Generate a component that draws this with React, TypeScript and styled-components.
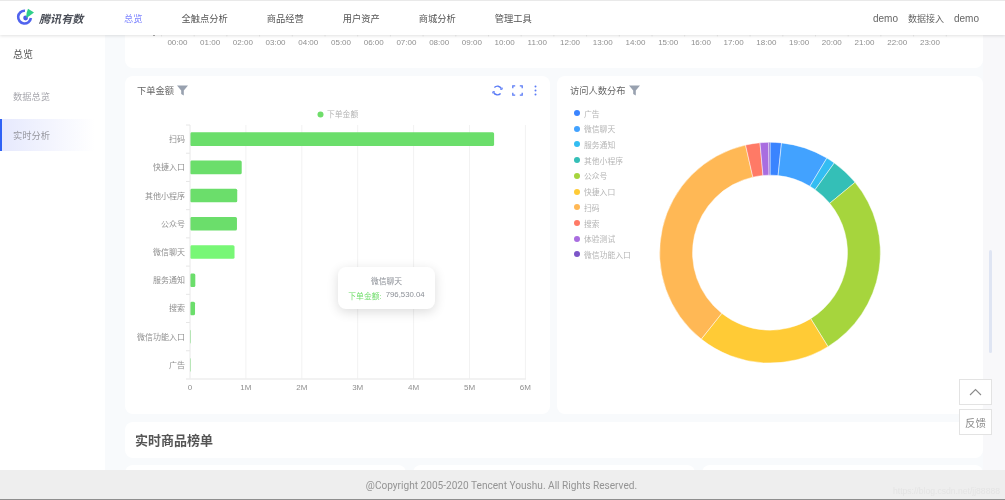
import React from "react";
import styled, { createGlobalStyle } from "styled-components";

const Global = createGlobalStyle`
  html, body { margin: 0; padding: 0; background: #f8fafc; }
  body { font-family: "Liberation Sans", "Noto Sans CJK SC", sans-serif; }
  * { box-sizing: border-box; }
`;

const Page = styled.div`
  position: relative;
  width: 1005px;
  height: 500px;
  overflow: hidden;
  display: flex;
  flex-direction: column;
  background: #f8fafc;
  border-top: 1px solid #e9e9e9;
  filter: blur(0.35px);
`;

const Header = styled.header`
  position: relative;
  z-index: 2;
  flex: 0 0 34px;
  display: flex;
  align-items: center;
  background: #fff;
  box-shadow: 0 1px 3px rgba(0, 0, 0, 0.12);
  padding-right: 26px;
`;

const Brand = styled.div`
  width: 124px;
  display: flex;
  align-items: center;
  gap: 4px;
  padding-left: 16px;
`;

const BrandName = styled.span`
  font-size: 11px;
  font-weight: 700;
  font-style: italic;
  color: #4b4f58;
  letter-spacing: 0.1px;
`;

const Nav = styled.nav`
  display: flex;
  gap: 39px;
  flex: 1;
`;

const NavItem = styled.span<{ $active?: boolean }>`
  font-size: 9.25px;
  color: ${(p) => (p.$active ? "#7f86ff" : "#555")};
`;

const HeaderRight = styled.div`
  display: flex;
  gap: 10px;
  align-items: center;
  font-size: 10px;
  color: #666;
`;

const Accent = styled.span`
  font-size: 9px;
`;

const Body = styled.div`
  flex: 1;
  min-height: 0;
  display: flex;
`;

const Sidebar = styled.aside`
  flex: 0 0 105px;
  background: #fff;
  display: flex;
  flex-direction: column;
`;

const SideTitle = styled.div`
  font-size: 10px;
  color: #555;
  padding: 11px 0 0 13px;
  height: 45px;
`;

const SideItem = styled.div<{ $active?: boolean }>`
  height: 32px;
  width: 95px;
  display: flex;
  align-items: center;
  padding-left: ${(p) => (p.$active ? "11px" : "13px")};
  font-size: 9.25px;
  color: #a8a8ae;
  margin-bottom: ${(p) => (p.$active ? "0" : "7px")};
  ${(p) =>
    p.$active
      ? `border-left: 2px solid #2f62f5; background: linear-gradient(90deg, #e6e9fd, #ffffff); color: #97979f;`
      : ""}
`;

const Content = styled.main`
  flex: 1;
  min-width: 0;
  padding-left: 20px;
  display: flex;
  flex-direction: column;
  gap: 8px;
  overflow: hidden;
`;

const Card = styled.section`
  background: #fff;
  border-radius: 8px;
`;

const TopCard = styled(Card)`
  flex: 0 0 33px;
  border-radius: 0 0 8px 8px;
  overflow: hidden;
`;

const ChartRow = styled.div`
  flex: 0 0 338px;
  display: flex;
  gap: 7px;
`;

const BarCard = styled(Card)`
  position: relative;
  flex: 0 0 425px;
  padding: 7px 0 0 12px;
`;

const PieCard = styled(Card)`
  flex: 1;
  display: flex;
  padding: 7px 0 0 13px;
`;

const TitleRow = styled.div`
  height: 14px;
  display: flex;
  align-items: center;
  gap: 3px;
  font-size: 9.25px;
  color: #666;
`;

const ToolIcons = styled.div`
  margin-left: auto;
  margin-right: 13px;
  display: flex;
  gap: 9px;
  align-items: center;
`;

const DotsSlot = styled.span`
  display: flex;
  margin-left: 2px;
`;

const BarChartWrap = styled.div`
  margin-top: 9px;
  height: 308px;
`;

const LegendColumn = styled.div`
  flex: 0 0 85px;
`;

const LegendList = styled.ul`
  list-style: none;
  margin: 11px 0 0 4px;
  padding: 0;
  display: flex;
  flex-direction: column;
  gap: 5.72px;
`;

const LegendItem = styled.li`
  height: 10px;
  display: flex;
  align-items: center;
  gap: 4px;
  font-size: 7.8px;
  color: #b5b5b5;
  white-space: nowrap;
`;

const Dot = styled.i<{ $color: string }>`
  width: 6px;
  height: 6px;
  border-radius: 50%;
  background: ${(p) => p.$color};
`;

const AxisText = styled.text`
  font-family: "Liberation Sans", "Noto Sans CJK SC", sans-serif;
  font-size: 8px;
  fill: #8f8f8f;
`;

const LegendText = styled(AxisText)`
  font-size: 7.8px;
  fill: #b5b5b5;
`;

const Tooltip = styled.div`
  position: absolute;
  left: 213px;
  top: 191px;
  width: 97px;
  height: 42px;
  background: #fff;
  border-radius: 8px;
  box-shadow: 0 3px 12px rgba(0, 0, 0, 0.14);
  display: flex;
  flex-direction: column;
  align-items: center;
  justify-content: center;
  gap: 4px;
  font-size: 7.8px;
  color: #8b8f96;
`;

const TipRow = styled.div`
  display: flex;
  gap: 4px;
  white-space: nowrap;
`;

const TipLabel = styled.span`
  color: #6fdd6a;
`;

const SectionCard = styled(Card)`
  flex: 0 0 36px;
  display: flex;
  align-items: center;
  padding: 0 0 2px 10px;
  font-size: 13px;
  font-weight: 700;
  color: #555;
`;

const BottomGrid = styled.div`
  flex: 0 0 20px;
  margin-top: -1px;
  display: grid;
  grid-template-columns: repeat(3, 1fr);
  gap: 7px;
`;

const ScrollTrack = styled.div`
  flex: 0 0 22px;
  position: relative;
  background: #f8f8fa;
`;

const ScrollThumb = styled.div`
  position: absolute;
  left: 6px;
  top: 215px;
  width: 3px;
  height: 103px;
  background: #dfe5f3;
  border-radius: 2px;
`;

const Footer = styled.footer`
  position: relative;
  z-index: 2;
  flex: 0 0 30px;
  display: flex;
  align-items: center;
  justify-content: center;
  background: #eeeeee;
  border-bottom: 1px solid #8e8e8e;
  font-family: "Roboto", "Liberation Sans", sans-serif;
  font-size: 10.1px;
  color: #949494;
  padding: 1px 2px 0 0;
`;

const Watermark = styled.span`
  position: absolute;
  right: 5px;
  bottom: 3px;
  font-family: "Liberation Sans", sans-serif;
  font-size: 8.6px;
  color: #e4e4e4;
`;

const FloatButtons = styled.div`
  position: absolute;
  z-index: 3;
  left: 959px;
  top: 378px;
  display: flex;
  flex-direction: column;
  gap: 4px;
`;

const FloatButton = styled.button`
  width: 33px;
  height: 26px;
  padding: 0;
  background: #fff;
  border: 1px solid #e3e3e3;
  display: flex;
  align-items: center;
  justify-content: center;
  font-family: inherit;
  font-size: 10.5px;
  color: #8b8b8b;
`;

const DonutWrap = styled.div`
  margin: 55px 0 0 0;
  height: 230px;
`;

const hours = Array.from({ length: 24 }, (_, i) => `${String(i).padStart(2, "0")}:00`);

const bars = [
  { name: "扫码", value: 5.44 },
  { name: "快捷入口", value: 0.925 },
  { name: "其他小程序", value: 0.845 },
  { name: "公众号", value: 0.84 },
  { name: "微信聊天", value: 0.7965, hover: true },
  { name: "服务通知", value: 0.095 },
  { name: "搜索", value: 0.09 },
  { name: "微信功能入口", value: 0.015 },
  { name: "广告", value: 0.01 },
];

const slices = [
  { name: "广告", color: "#3a84ff", end: 6 },
  { name: "微信聊天", color: "#42a2ff", end: 31 },
  { name: "服务通知", color: "#33bdf2", end: 35.6 },
  { name: "其他小程序", color: "#34bfb7", end: 50.4 },
  { name: "公众号", color: "#a6d53d", end: 148.3 },
  { name: "快捷入口", color: "#ffcb36", end: 218.5 },
  { name: "扫码", color: "#ffb855", end: 347.2 },
  { name: "搜索", color: "#ff7a66", end: 354.8 },
  { name: "体验测试", color: "#a96de0", end: 359.3 },
  { name: "微信功能入口", color: "#7c55c8", end: 360 },
];

const polar = (cx: number, cy: number, r: number, deg: number) => {
  const a = (deg * Math.PI) / 180;
  return [cx + r * Math.sin(a), cy - r * Math.cos(a)].map((n) => n.toFixed(2)).join(" ");
};

const ring = (cx: number, cy: number, ro: number, ri: number, s: number, e: number) => {
  const large = e - s > 180 ? 1 : 0;
  return `M${polar(cx, cy, ro, s)}A${ro} ${ro} 0 ${large} 1 ${polar(cx, cy, ro, e)}L${polar(
    cx,
    cy,
    ri,
    e
  )}A${ri} ${ri} 0 ${large} 0 ${polar(cx, cy, ri, s)}Z`;
};

const Logo = () => (
  <svg width="19" height="20" viewBox="0 0 19 20">
    <path
      d="M9 2.7A6.4 6.4 0 1 0 14.9 10"
      fill="none"
      stroke="#5063ee"
      strokeWidth="2.6"
    />
    <circle cx="9.6" cy="10" r="2.4" fill="#4a5ce8" />
    <path d="M12 .8 18 4.4 13.4 8 10.2 10 10.6 5Z" fill="#2fcf8a" />
  </svg>
);

const Funnel = () => (
  <svg width="11" height="11" viewBox="0 0 11 11">
    <path d="M0 0.5H11L6.8 5.4V10.5L4.2 9V5.4Z" fill="#98a1af" />
  </svg>
);

const Refresh = () => (
  <svg width="11" height="11" viewBox="0 0 11 11" fill="none" stroke="#5a7bf6" strokeWidth="1.4">
    <path d="M9.4 3.6A4.3 4.3 0 0 0 2.4 2.5" />
    <path d="M1.6 7.4A4.3 4.3 0 0 0 8.6 8.5" />
    <path d="M8.2 4.3H10.2V2.6M2.8 6.7H.8V8.4" strokeWidth="1" />
  </svg>
);

const Expand = () => (
  <svg width="11" height="11" viewBox="0 0 11 11" fill="none" stroke="#5a7bf6" strokeWidth="1.3">
    <path d="M.8 3.2V.8H3.2M7.8.8H10.2V3.2M10.2 7.8V10.2H7.8M3.2 10.2H.8V7.8" />
  </svg>
);

const Dots = () => (
  <svg width="3" height="11" viewBox="0 0 3 11" fill="#5a7bf6">
    <circle cx="1.5" cy="1.5" r="1" />
    <circle cx="1.5" cy="5.5" r="1" />
    <circle cx="1.5" cy="9.5" r="1" />
  </svg>
);

const Chevron = () => (
  <svg width="13" height="8" viewBox="0 0 13 8" fill="none" stroke="#8a8a8a" strokeWidth="1.1">
    <path d="M1 7L6.5 1.5 12 7" />
  </svg>
);

const TimeAxis = () => (
  <svg width="858" height="33" viewBox="125 35 858 33">
    {Array.from({ length: 25 }, (_, i) => (
      <path key={i} d={`M${161.5 + i * 32.7} 33V36.5`} stroke="#ececec" />
    ))}
    <path d="M153 35.5H155" stroke="#aaaaaa" />
    {hours.map((h, i) => (
      <AxisText key={h} x={177.4 + i * 32.72} y={44.8} textAnchor="middle">
        {h}
      </AxisText>
    ))}
  </svg>
);

const X0 = 190;
const UNIT = 55.9;
const BAND = 28.22;
const TOP = 125;
const BOTTOM = 379;

const BarChart = () => (
  <svg width="413" height="308" viewBox="137 106 413 308">
    <circle cx="320.5" cy="114.5" r="3" fill="#6fdd6a" />
    <LegendText x="327" y="117.2">下单金额</LegendText>
    {[1, 2, 3, 4, 5, 6].map((m) => (
      <path key={m} d={`M${X0 + m * UNIT} ${TOP}V${BOTTOM}`} stroke="#f2f2f2" />
    ))}
    {bars.map((b, i) => {
      const mid = TOP + BAND * (i + 0.5);
      return (
        <g key={b.name}>
          <path d={`M186 ${TOP + BAND * i}H190`} stroke="#e6e6e6" />
          <rect
            x={X0}
            y={mid - 6.8}
            width={Math.max(b.value * UNIT, 0.8)}
            height={13.6}
            rx={1.5}
            fill={b.hover ? "#78f776" : "#6bde6b"}
          />
          <AxisText x={185} y={mid + 3} textAnchor="end">
            {b.name}
          </AxisText>
        </g>
      );
    })}
    <path d={`M190 ${TOP}V${BOTTOM}`} stroke="#e8e8e8" />
    <path d={`M186 379H526`} stroke="#eeeeee" strokeWidth="1.4" />
    {[0, 1, 2, 3, 4, 5, 6].map((m) => (
      <AxisText key={m} x={X0 + m * UNIT} y={390} textAnchor="middle">
        {m === 0 ? "0" : `${m}M`}
      </AxisText>
    ))}
  </svg>
);

const Donut = () => {
  let start = 0;
  return (
    <svg width="230" height="230" viewBox="655 138 230 230">
      {slices.map((s) => {
        const d = ring(770, 252.7, 110.4, 77.5, start, s.end);
        start = s.end;
        return <path key={s.name} d={d} fill={s.color} stroke="#fff" strokeOpacity="0.6" strokeWidth="0.8" />;
      })}
    </svg>
  );
};

export default function App() {
  return (
    <>
      <Global />
      <Page>
        <Header>
          <Brand>
            <Logo />
            <BrandName>腾讯有数</BrandName>
          </Brand>
          <Nav>
            {["总览", "全触点分析", "商品经营", "用户资产", "商城分析", "管理工具"].map((n, i) => (
              <NavItem key={n} $active={i === 0}>
                {n}
              </NavItem>
            ))}
          </Nav>
          <HeaderRight>
            <span>demo</span>
            <Accent>数据接入</Accent>
            <span>demo</span>
          </HeaderRight>
        </Header>
        <Body>
          <Sidebar>
            <SideTitle>总览</SideTitle>
            <SideItem>数据总览</SideItem>
            <SideItem $active>实时分析</SideItem>
          </Sidebar>
          <Content>
            <TopCard>
              <TimeAxis />
            </TopCard>
            <ChartRow>
              <BarCard>
                <TitleRow>
                  下单金额
                  <Funnel />
                  <ToolIcons>
                    <Refresh />
                    <Expand />
                    <DotsSlot>
                      <Dots />
                    </DotsSlot>
                  </ToolIcons>
                </TitleRow>
                <BarChartWrap>
                  <BarChart />
                </BarChartWrap>
                <Tooltip>
                  <span>微信聊天</span>
                  <TipRow>
                    <TipLabel>下单金额:</TipLabel>
                    <span>796,530.04</span>
                  </TipRow>
                </Tooltip>
              </BarCard>
              <PieCard>
                <LegendColumn>
                  <TitleRow>
                    访问人数分布
                    <Funnel />
                  </TitleRow>
                  <LegendList>
                    {slices.map((s) => (
                      <LegendItem key={s.name}>
                        <Dot $color={s.color} />
                        {s.name}
                      </LegendItem>
                    ))}
                  </LegendList>
                </LegendColumn>
                <DonutWrap>
                  <Donut />
                </DonutWrap>
              </PieCard>
            </ChartRow>
            <SectionCard>实时商品榜单</SectionCard>
            <BottomGrid>
              <Card />
              <Card />
              <Card />
            </BottomGrid>
          </Content>
          <ScrollTrack>
            <ScrollThumb />
          </ScrollTrack>
        </Body>
        <Footer>
          @Copyright 2005-2020 Tencent Youshu. All Rights Reserved.
          <Watermark>https://blog.csdn.net/jj88888</Watermark>
        </Footer>
        <FloatButtons>
          <FloatButton aria-label="回到顶部">
            <Chevron />
          </FloatButton>
          <FloatButton>反馈</FloatButton>
        </FloatButtons>
      </Page>
    </>
  );
}
